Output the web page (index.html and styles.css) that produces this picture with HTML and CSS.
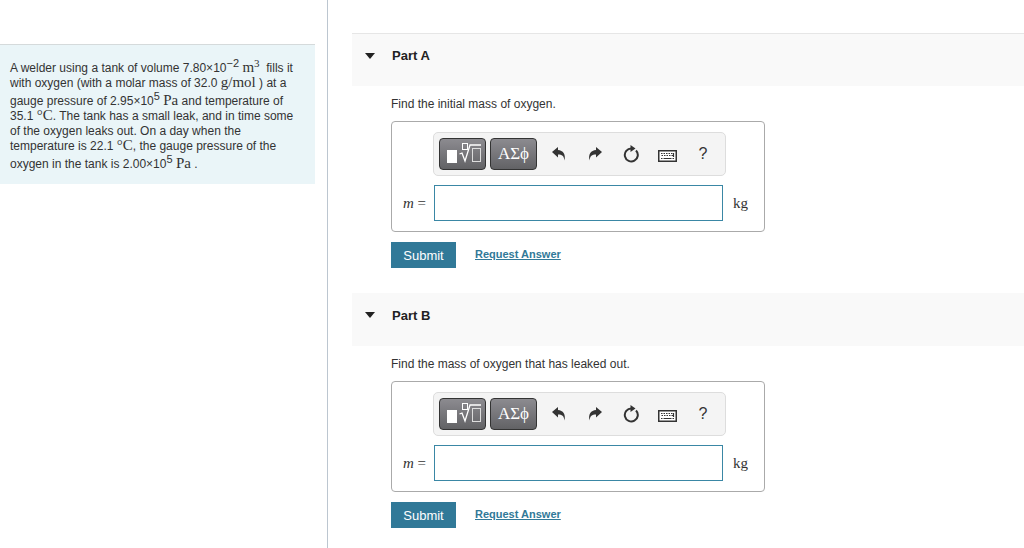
FILE: index.html
```
<!DOCTYPE html>
<html lang="en">
<head>
  <meta charset="UTF-8" />
  <meta name="viewport" content="width=device-width, initial-scale=1.0"/>
  <title>Mass of Oxygen in a Leaking Tank</title>
  <link rel="stylesheet" href="styles.css">
</head>
<body>
  <svg class="icon-defs" aria-hidden="true">
    <symbol id="icon-root" viewBox="0 0 38 24">
      <rect x="3" y="8" width="10" height="13" fill="#fff"/>
      <path d="M15.500 12l2.500-1 3 8 5-16h11" fill="none" stroke="#fff" stroke-width="1.300"/>
      <rect x="18.500" y="1.500" width="5" height="6" fill="none" stroke="#fff"/>
      <rect x="28.500" y="6.500" width="8" height="13" fill="none" stroke="#ddd"/>
    </symbol>
    <symbol id="icon-undo" viewBox="0 0 14 14">
      <path d="M0 5L6 0v3c5 .5 8 4 6.500 10.500C12 9 10 7.500 6 7.500v3z" fill="#333"/>
    </symbol>
    <symbol id="icon-reset" viewBox="0 0 16 18">
      <path d="M13 5.500A6.500 6.500 0 1 1 8.500 3.500" fill="none" stroke="#333" stroke-width="2"/>
      <path d="M7.500 0l5 3.500-5 3.500z" fill="#333"/>
    </symbol>
    <symbol id="icon-keyboard" viewBox="0 0 19 12">
      <rect x=".75" y=".75" width="17.500" height="10.500" fill="#fff" stroke="#333" stroke-width="1.500"/>
      <path d="M3 3.500h13M3.500 5.500h12" stroke="#333" stroke-dasharray="1.500 1"/>
      <path d="M3 8.500h1.500M5.500 8.500h8M14.500 8.500h1.500M15.500 3v4" stroke="#333" stroke-width="1.200"/>
    </symbol>
  </svg>

  <aside class="sidebar">
    <div class="problem">
      A welder using a tank of volume 7.80×10<sup>−2</sup> <span class="unit">m<sup>3</sup></span>&nbsp; fills it<br>
      with oxygen (with a molar mass of 32.0 <span class="unit">g/mol</span> ) at a<br>
      gauge pressure of 2.95×10<sup>5</sup> <span class="unit">Pa</span> and temperature of<br>
      35.1 <span class="unit">°C</span>. The tank has a small leak, and in time some<br>
      of the oxygen leaks out. On a day when the<br>
      temperature is 22.1 <span class="unit">°C</span>, the gauge pressure of the<br>
      oxygen in the tank is 2.00×10<sup>5</sup> <span class="unit">Pa</span> .
    </div>
  </aside>

  <main class="parts">
    <section class="part">
      <header class="part-header">
        <span class="arrow"></span>
        <h2>Part A</h2>
      </header>
      <form class="part-body" onsubmit="return false">
        <p>Find the initial mass of oxygen.</p>
        <div class="answer">
          <div class="toolbar">
            <button type="button" class="tool" aria-label="Templates"><svg width="38" height="24"><use href="#icon-root"/></svg></button>
            <button type="button" class="tool">ΑΣϕ</button>
            <button type="button" class="action" aria-label="Undo"><svg width="14" height="14"><use href="#icon-undo"/></svg></button>
            <button type="button" class="action" aria-label="Redo"><svg class="flip" width="14" height="14"><use href="#icon-undo"/></svg></button>
            <button type="button" class="action" aria-label="Reset"><svg width="16" height="18"><use href="#icon-reset"/></svg></button>
            <button type="button" class="action" aria-label="Keyboard shortcuts"><svg class="keyboard" width="19" height="12"><use href="#icon-keyboard"/></svg></button>
            <button type="button" class="action">?</button>
          </div>
          <label for="massA"><i>m</i> =</label>
          <input type="text" id="massA">
          <span class="suffix">kg</span>
        </div>
        <div class="buttons">
          <button type="submit" class="submit">Submit</button>
          <a href="#">Request Answer</a>
        </div>
      </form>
    </section>

    <section class="part">
      <header class="part-header">
        <span class="arrow"></span>
        <h2>Part B</h2>
      </header>
      <form class="part-body" onsubmit="return false">
        <p>Find the mass of oxygen that has leaked out.</p>
        <div class="answer">
          <div class="toolbar">
            <button type="button" class="tool" aria-label="Templates"><svg width="38" height="24"><use href="#icon-root"/></svg></button>
            <button type="button" class="tool">ΑΣϕ</button>
            <button type="button" class="action" aria-label="Undo"><svg width="14" height="14"><use href="#icon-undo"/></svg></button>
            <button type="button" class="action" aria-label="Redo"><svg class="flip" width="14" height="14"><use href="#icon-undo"/></svg></button>
            <button type="button" class="action" aria-label="Reset"><svg width="16" height="18"><use href="#icon-reset"/></svg></button>
            <button type="button" class="action" aria-label="Keyboard shortcuts"><svg class="keyboard" width="19" height="12"><use href="#icon-keyboard"/></svg></button>
            <button type="button" class="action">?</button>
          </div>
          <label for="massB"><i>m</i> =</label>
          <input type="text" id="massB">
          <span class="suffix">kg</span>
        </div>
        <div class="buttons">
          <button type="submit" class="submit">Submit</button>
          <a href="#">Request Answer</a>
        </div>
      </form>
    </section>
  </main>
</body>
</html>
```
FILE: styles.css
```
* { box-sizing: border-box; }
body {
  display: flex;
  min-height: 100vh;
  margin: 0;
  font-family: "Liberation Sans", Arial, sans-serif;
  font-size: 12px;
  line-height: 15px;
  color: #333;
  background: #fff;
}
.icon-defs {
  display: none;
}
.sidebar {
  flex: 0 0 328px;
  padding: 44px 12px 0 0;
  border-right: 1px solid #bcc6d0;
}
.problem {
  padding: 13px 0 12px 10px;
  border-top: 1px solid #d5dadb;
  background: #eaf5f8;
  white-space: nowrap;
}
sup {
  font-size: 11px;
  line-height: 10px;
  vertical-align: 5px;
}
.unit {
  font-family: "Liberation Serif", "Times New Roman", serif;
  font-size: 15px;
  line-height: 12px;
}
.parts {
  flex: 1;
  padding: 33px 0 0 24px;
}
.part {
  margin-bottom: 25px;
}
.part-header {
  display: flex;
  align-items: center;
  height: 53px;
  padding: 0 13px 9px;
  background: #f9f9f9;
}
.part:first-child .part-header {
  border-top: 1px solid #e6e6e6;
}
.arrow {
  margin-right: 17px;
  border: 5px solid transparent;
  border-top: 6px solid #222;
  border-bottom: 0;
}
h2 {
  margin: 0;
  font-size: 13px;
  color: #222;
}
.part-body {
  padding: 11px 0 0 39px;
}
.part-body p {
  margin: 0 0 9px;
}
.answer {
  display: grid;
  grid-template-columns: 34px 291px auto;
  column-gap: 8px;
  row-gap: 9px;
  align-items: center;
  width: 374px;
  padding: 10px 0;
  border: 1px solid #aaa;
  border-radius: 4px;
}
.toolbar {
  grid-column: 1 / -1;
  display: flex;
  align-items: center;
  width: 293px;
  height: 44px;
  margin-left: 41px;
  padding-left: 5px;
  border: 1px solid #ddd;
  border-radius: 5px;
  background: #f4f4f4;
}
.toolbar button {
  display: flex;
  flex: none;
  align-items: center;
  justify-content: center;
  padding: 0;
}
.tool {
  width: 47px;
  height: 32px;
  margin-right: 4px;
  border: 1px solid #333;
  border-radius: 4px;
  background: linear-gradient(#8c8b90, #626265);
  color: #fff;
  font-family: "Liberation Serif", "Times New Roman", serif;
  font-size: 17px;
}
.action {
  width: 36px;
  height: 32px;
  border: 0;
  background: none;
  color: #333;
  font-family: "Liberation Sans", Arial, sans-serif;
  font-size: 16px;
}
.flip {
  transform: scaleX(-1);
}
.keyboard {
  margin-top: 4px;
}
.answer label,
.suffix {
  font-family: "Liberation Serif", "Times New Roman", serif;
  font-size: 15px;
  white-space: nowrap;
}
.answer label {
  text-align: right;
}
.answer input {
  width: 289px;
  height: 36px;
  padding: 0 8px;
  border: 1px solid #3a87a5;
  font-size: 15px;
}
.buttons {
  display: flex;
  align-items: center;
  gap: 19px;
  margin-top: 10px;
}
.submit {
  width: 65px;
  height: 26px;
  padding: 0;
  border: 0;
  background: #317998;
  color: #fff;
  font-family: "Liberation Sans", Arial, sans-serif;
  font-size: 13px;
}
.buttons a {
  padding-bottom: 2px;
  font-size: 11px;
  font-weight: bold;
  color: #317998;
}
```
